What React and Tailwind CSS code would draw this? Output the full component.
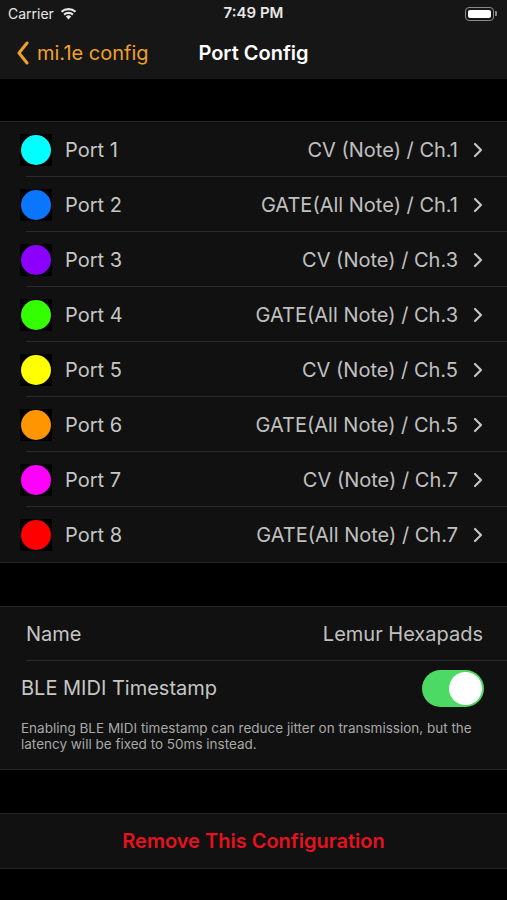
import React from "react";

const ports = [
  { name: "Port 1", color: "#00ffff", value: "CV (Note) / Ch.1" },
  { name: "Port 2", color: "#0a75ff", value: "GATE(All Note) / Ch.1" },
  { name: "Port 3", color: "#8c00ff", value: "CV (Note) / Ch.3" },
  { name: "Port 4", color: "#33ff00", value: "GATE(All Note) / Ch.3" },
  { name: "Port 5", color: "#ffff00", value: "CV (Note) / Ch.5" },
  { name: "Port 6", color: "#ff9500", value: "GATE(All Note) / Ch.5" },
  { name: "Port 7", color: "#ff00ff", value: "CV (Note) / Ch.7" },
  { name: "Port 8", color: "#ff0000", value: "GATE(All Note) / Ch.7" },
];

function Chevron() {
  return (
    <svg width="12" height="16" viewBox="0 0 12 16" className="ml-[14px] mr-[23px]">
      <path d="M3 2 L9 8 L3 14" fill="none" stroke="#c4c4c4" strokeWidth="2.2" strokeLinecap="round" strokeLinejoin="round" />
    </svg>
  );
}

export default function App() {
  return (
    <div className="w-[507px] min-h-[900px] bg-black text-[#c6c6c6]" style={{ fontFamily: "Inter, 'Liberation Sans', sans-serif" }}>
      <div className="bg-[#161616]">
        <div className="h-[27px] flex items-center justify-between px-[8px] relative">
          <div className="flex items-center gap-[6px] text-[14px] text-[#e8e8e8]">
            <span>Carrier</span>
            <svg width="17" height="13" viewBox="0 0 17 13">
              <path d="M8.5 12.5 L5.8 9.4 A4 4 0 0 1 11.2 9.4 Z" fill="#e8e8e8" />
              <path d="M3.4 6.8 A7.5 7.5 0 0 1 13.6 6.8 L12.2 8.4 A5.5 5.5 0 0 0 4.8 8.4 Z" fill="#e8e8e8" />
              <path d="M0.8 4 A11.3 11.3 0 0 1 16.2 4 L14.8 5.6 A9.3 9.3 0 0 0 2.2 5.6 Z" fill="#e8e8e8" />
            </svg>
          </div>
          <div className="absolute left-0 right-0 text-center text-[15px] font-semibold text-[#e8e8e8] pointer-events-none">7:49 PM</div>
          <div className="flex items-center mr-[2px]">
            <div className="w-[29px] h-[14px] rounded-[4px] border border-[#8a8a8a] p-[2px]">
              <div className="w-full h-full bg-white rounded-[2px]" />
            </div>
            <div className="w-[2px] h-[5px] bg-[#8a8a8a] rounded-r-[1px] ml-[1px]" />
          </div>
        </div>
        <div className="h-[52px] relative flex items-center">
          <div className="flex items-center pl-[16px] text-[#f0a028] text-[20px]">
            <svg width="14" height="24" viewBox="0 0 14 24" className="mr-[7px]">
              <path d="M11 2 L3 12 L11 22" fill="none" stroke="#f0a028" strokeWidth="3" strokeLinecap="round" strokeLinejoin="round" />
            </svg>
            <span className="leading-none">mi.1e config</span>
          </div>
          <div className="absolute left-0 right-0 text-center text-[20px] font-semibold text-white pointer-events-none">Port Config</div>
        </div>
      </div>

      <div className="h-[42px]" />

      <div className="bg-[#111111] border-t border-b border-[#252525]">
        {ports.map((p, i) => (
          <div key={p.name} className="relative h-[55px] flex items-center">
            <div className="ml-[20px] w-[32px] h-[32px] bg-black flex items-center justify-center">
              <div className="w-[30px] h-[30px] rounded-full" style={{ backgroundColor: p.color }} />
            </div>
            <span className="ml-[13px] text-[20px]">{p.name}</span>
            <span className="ml-auto text-[20px] text-[#c0c0c0]">{p.value}</span>
            <Chevron />
            {i < ports.length - 1 && <div className="absolute bottom-0 left-[26px] right-0 h-px bg-[#2a2a2a]" />}
          </div>
        ))}
      </div>

      <div className="h-[43px]" />

      <div className="bg-[#111111] border-t border-b border-[#252525]">
        <div className="relative h-[54px] flex items-center px-[26px] text-[20px]">
          <span>Name</span>
          <span className="ml-auto text-[#c0c0c0] mr-[-2px]">Lemur Hexapads</span>
          <div className="absolute bottom-0 left-[26px] right-0 h-px bg-[#2a2a2a]" />
        </div>
        <div className="h-[54px] flex items-center pl-[21px] pr-[23px] text-[20px]">
          <span>BLE MIDI Timestamp</span>
          <div className="ml-auto w-[62px] h-[37px] rounded-full bg-[#4cd964] relative">
            <div className="absolute right-[2px] top-[2px] w-[33px] h-[33px] rounded-full bg-white" />
          </div>
        </div>
        <div className="px-[21px] pr-[24px] pt-[5px] pb-[17px] text-[13.5px] leading-[16px] text-[#a8a8a8]">
          Enabling BLE MIDI timestamp can reduce jitter on transmission, but the latency will be fixed to 50ms instead.
        </div>
      </div>

      <div className="h-[43px]" />

      <div className="bg-[#111111] border-t border-b border-[#252525] h-[56px] flex items-center justify-center">
        <span className="text-[20px] font-semibold text-[#e5121f]">Remove This Configuration</span>
      </div>
    </div>
  );
}
